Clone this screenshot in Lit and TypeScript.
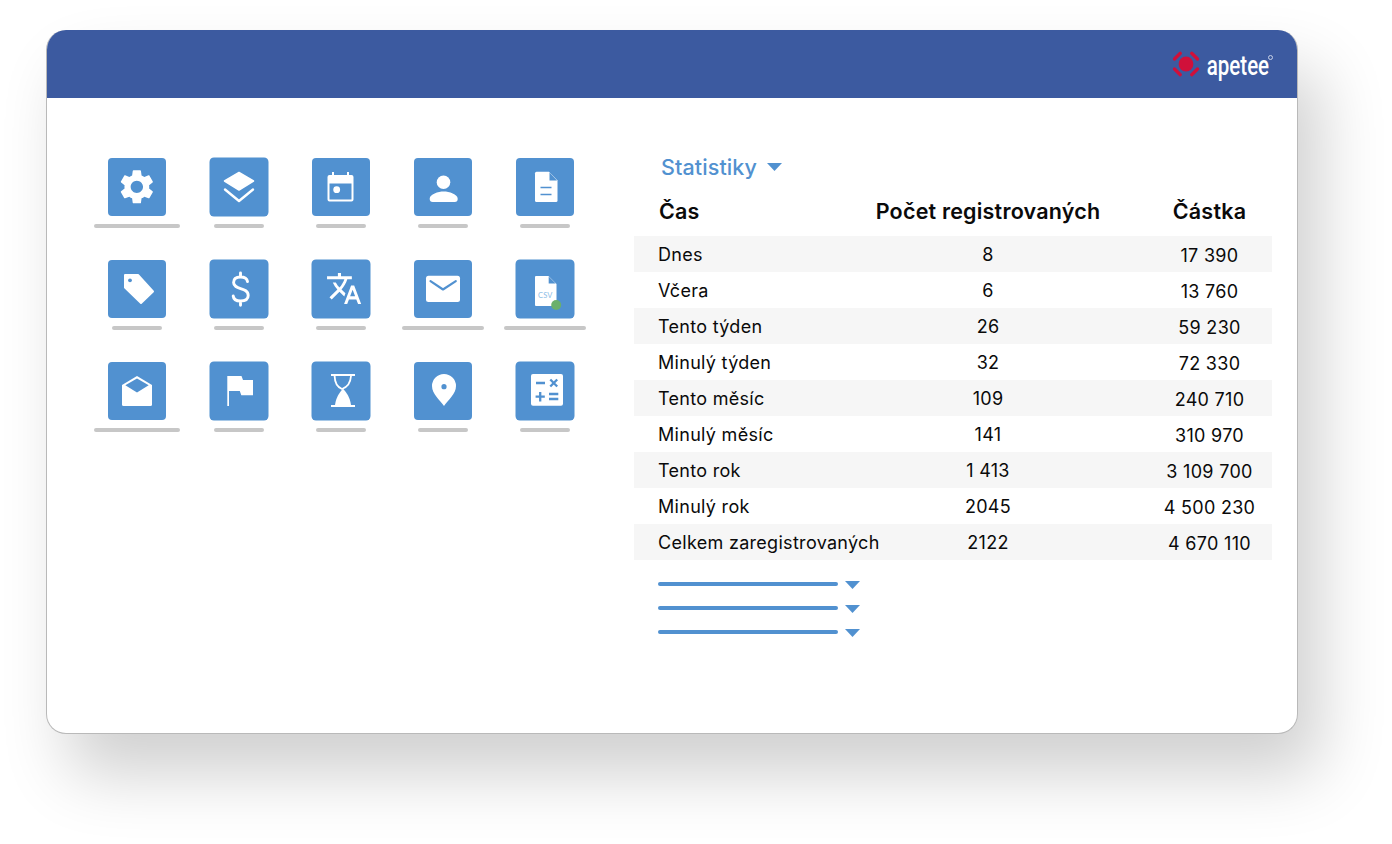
import { LitElement, html, css, svg, unsafeCSS } from "lit";
import { customElement } from "lit/decorators.js";

const B = "#5191d0";
const BC = unsafeCSS(B);

const tiles = [
  { bar: 86, lg: false, g: svg`<g transform="translate(8.2,8.200) scale(1.72)"><path fill="#fff" d="M19.14 12.94c.04-.3.06-.61.06-.94 0-.32-.02-.64-.07-.94l2.03-1.58c.18-.14.23-.41.12-.61l-1.92-3.32c-.12-.22-.37-.29-.59-.22l-2.39.96c-.5-.38-1.03-.7-1.62-.94l-.36-2.54c-.04-.24-.24-.41-.48-.41h-3.84c-.24 0-.43.17-.47.41l-.36 2.54c-.59.24-1.13.57-1.62.94l-2.39-.96c-.22-.08-.47 0-.59.22L2.74 8.87c-.12.21-.08.47.12.61l2.03 1.58c-.05.3-.09.63-.09.94s.02.64.07.94l-2.03 1.58c-.18.14-.23.41-.12.61l1.92 3.32c.12.22.37.29.59.22l2.39-.96c.5.38 1.03.7 1.62.94l.36 2.54c.05.24.24.41.48.41h3.84c.24 0 .44-.17.47-.41l.36-2.54c.59-.24 1.13-.56 1.62-.94l2.39.96c.22.08.47 0 .59-.22l1.92-3.32c.12-.22.07-.47-.12-.61l-2.01-1.58zM12 15.6c-1.98 0-3.6-1.62-3.6-3.6s1.62-3.6 3.6-3.6 3.6 1.62 3.6 3.6-1.62 3.6-3.6 3.6z"/></g>` },
  { bar: 50, lg: true, g: svg`<path fill="#fff" stroke="#fff" stroke-width="1.5" stroke-linejoin="round" d="M29 14.5 43.5 23 29 32 14.5 23z"/><path fill="none" stroke="#fff" stroke-width="2.400" stroke-linecap="round" stroke-linejoin="round" d="M15 31.500 29 43 43 31.500"/>` },
  { bar: 50, lg: false, g: svg`<path fill="#fff" fill-rule="evenodd" d="M17.5 17H20v-3h2v3h13v-3h2v3h2.500a2 2 0 0 1 2 2v22.600a2 2 0 0 1-2 2h-22a2 2 0 0 1-2-2V19a2 2 0 0 1 2-2zM17.5 25.500v16h22v-16z"/><circle cx="24.700" cy="31.700" r="3.400" fill="#fff"/>` },
  { bar: 50, lg: false, g: svg`<circle cx="29.500" cy="24.300" r="6.800" fill="#fff"/><path fill="#fff" d="M15.700 40.800c0-4.600 8.600-7.200 14-7.200s14 2.600 14 7.200V41a3 3 0 0 1-3 3h-22a3 3 0 0 1-3-3z"/>` },
  { bar: 50, lg: false, g: svg`<path fill="#fff" d="M20.500 13.800H33L41.500 22.500V42.500a1.500 1.500 0 0 1-1.500 1.500H20.500a1.500 1.500 0 0 1-1.500-1.500V15.300a1.500 1.500 0 0 1 1.500-1.500z"/><path fill="${B}" d="M33.500 14.500v8h7.500z"/><path fill="${B}" d="M24.500 28.700H35.500v1.600H24.500zM24.500 35.700H35.500v1.600H24.500z"/>` },

  { bar: 50, lg: false, g: svg`<path fill="#fff" stroke="#fff" stroke-width="2" stroke-linejoin="round" d="M17 15H30L45 31.500 33 43 17 27.500z"/><circle cx="22" cy="20.300" r="1.900" fill="${B}"/>` },
  { bar: 50, lg: true, g: svg`<path fill="none" stroke="#fff" stroke-width="2.900" stroke-linecap="round" d="M37.500 21.500C37 18.500 34.500 17 30.500 17 26.300 17 23.600 19 23.600 22.500 23.600 30.500 38.200 26.500 38.200 35.600 38.200 39.300 35.200 41 30.500 41 26.300 41 23.500 39 23.200 36M30.500 13V17M30.500 41V45.200"/>` },
  { bar: 50, lg: true, g: svg`<g transform="translate(13.5,10) scale(1.55)"><path fill="#fff" d="M12.87 15.07l-2.54-2.51.03-.03c1.74-1.94 2.98-4.17 3.71-6.53H17V4h-7V2H8v2H1v1.99h11.17C11.5 7.92 10.44 9.75 9 11.35 8.07 10.32 7.3 9.19 6.69 8h-2c.73 1.63 1.73 3.17 2.98 4.56l-5.09 5.02L4 19l5-5 3.11 3.11.76-2.04zM18.5 10h-2L12 22h2l1.12-3h4.75L21 22h2l-4.5-12zm-2.62 7l1.62-4.33L19.12 17h-3.24z"/></g>` },
  { bar: 82, lg: false, g: svg`<rect x="12" y="15.700" width="34" height="26.300" rx="2.500" fill="#fff"/><path fill="none" stroke="${B}" stroke-width="2.200" stroke-linecap="round" stroke-linejoin="round" d="M16.500 21.200 29 29.500 41.800 21.200"/>` },
  { bar: 82, lg: true, g: svg`<path fill="#fff" d="M20 16H32.500L40.500 24V46H20a1 1 0 0 1-1-1V17a1 1 0 0 1 1-1z"/><path fill="${B}" d="M32.700 16.500v7h7z"/><text class="csv" x="29.300" y="37.600" text-anchor="middle">CSV</text><circle cx="40.200" cy="45" r="5" fill="#6bb06c"/>` },

  { bar: 86, lg: false, g: svg`<path fill="#fff" d="M14 23 29 14 44 23V42.500a1.500 1.500 0 0 1-1.500 1.500h-27a1.500 1.500 0 0 1-1.500-1.500z"/><path fill="${B}" d="M17.300 23.300 29 16.400 40.700 23.300 29 30.400z"/>` },
  { bar: 50, lg: true, g: svg`<path fill="#fff" d="M17.300 14H31.500L33 18H43V33.300H31.300L29.800 29H19V44H17.300z"/>` },
  { bar: 50, lg: true, g: svg`<path fill="#fff" d="M19 12h24v2H19zM19 43h24v2H19z"/><path fill="none" stroke="#fff" stroke-width="1.800" d="M22.600 14C22.800 21 25 25 30 27 35.800 25 38.500 21 39 14"/><path fill="#fff" d="M31 26.500C28 30 24 35 23 43H39C38 35 34 30 31 26.500z"/>` },
  { bar: 50, lg: false, g: svg`<path fill="#fff" d="M30 12a12 12 0 0 1 12 12c0 8-8 14-12 20-4-6-12-12-12-20a12 12 0 0 1 12-12z"/><circle cx="30" cy="24.700" r="2.600" fill="${B}"/>` },
  { bar: 50, lg: true, g: svg`<rect x="15" y="12" width="32" height="31.700" rx="2" fill="#fff"/><path fill="none" stroke="${B}" stroke-width="2.300" d="M20 21H29M34.300 17.500 41.200 24.500M41.200 17.500 34.300 24.500M24.200 30V39.400M19.600 34.700H28.800M33 32H42.300M33 37H42.300"/>` },
];

const rows = [
  ["Dnes", "8", "17 390"],
  ["Včera", "6", "13 760"],
  ["Tento týden", "26", "59 230"],
  ["Minulý týden", "32", "72 330"],
  ["Tento měsíc", "109", "240 710"],
  ["Minulý měsíc", "141", "310 970"],
  ["Tento rok", "1 413", "3 109 700"],
  ["Minulý rok", "2045", "4 500 230"],
  ["Celkem zaregistrovaných", "2122", "4 670 110"],
];

@customElement("app-root")
export class AppRoot extends LitElement {
  static styles = css`
    :host {
      display: block;
      box-sizing: border-box;
      height: 844px;
      padding: 30px 94px 110px 46px;
      background: #fff;
      overflow: hidden;
      font-family: "Inter", "Liberation Sans", sans-serif;
      color: #0a0a0a;
    }
    .card {
      box-sizing: border-box;
      height: 704px;
      border: 1px solid #b9b9b9;
      border-top: 0;
      border-radius: 20px;
      background: #fff;
      box-shadow: 22px 40px 66px rgba(0, 0, 0, 0.19);
      overflow: hidden;
    }
    .top {
      height: 68px;
      margin: 0 -1px;
      background: #3c5aa0;
      display: flex;
      align-items: center;
      justify-content: flex-end;
      padding-right: 27px;
    }
    .mark { display: block; margin-right: 3px; }
    .word {
      display: block;
      color: #fff;
      font-family: "Roboto", sans-serif;
      font-size: 27px;
      font-weight: 500;
      line-height: 30px;
      margin: 3px 0 0 -16.5px;
      transform: scaleX(0.76);
      transform-origin: 100% 50%;
    }
    .reg {
      width: 3px;
      height: 3px;
      border: 1px solid #c6d0e6;
      border-radius: 50%;
      margin: 0 -2px 14px -1px;
    }
    .body {
      display: flex;
      padding: 56px 0 0 39px;
      gap: 38px;
    }
    .grid {
      display: grid;
      grid-template-columns: repeat(5, 102px);
      grid-auto-rows: 70px;
      row-gap: 32px;
      margin-top: 4px;
      align-self: flex-start;
    }
    .cell {
      display: flex;
      flex-direction: column;
      align-items: center;
    }
    .tile {
      width: 58px;
      height: 58px;
      border-radius: 4px;
      background: ${BC};
      margin-bottom: 8px;
      flex: none;
    }
    .tile.lg { box-shadow: 0 0 0 0.5px ${BC}; }
    .tile svg { display: block; }
    .csv {
      font: 7.5px "Lato", sans-serif;
      fill: #8cbde6;
      letter-spacing: 0.2px;
    }
    .bar {
      height: 4px;
      border-radius: 2px;
      background: #c7c7c7;
    }
    .panel { width: 638px; }
    .title {
      display: flex;
      align-items: center;
      gap: 10px;
      padding-left: 27px;
      height: 26px;
      font-size: 21.5px;
      font-weight: 500;
      letter-spacing: 0.1px;
      color: ${BC};
    }
    table {
      width: 638px;
      table-layout: fixed;
      border-collapse: collapse;
    }
    col.a { width: 195px; }
    col.b { width: 318px; }
    col.c { width: 125px; }
    th {
      height: 56px;
      padding: 6px 0 0;
      font-size: 21.5px;
      font-weight: 600;
      letter-spacing: 0.2px;
      text-align: center;
      white-space: nowrap;
      box-sizing: border-box;
    }
    th:first-child { text-align: left; padding-left: 25px; }
    td {
      height: 36px;
      padding: 0;
      font-size: 18px;
      letter-spacing: 0.3px;
      text-align: center;
      white-space: nowrap;
      box-sizing: border-box;
    }
    td:first-child { text-align: left; padding-left: 24px; }
    td:last-child { padding-top: 2px; }
    tbody tr:nth-child(odd) { background: #f6f6f6; }
    .lines { margin: 12px 0 0 24px; }
    .line {
      display: flex;
      align-items: center;
      gap: 7px;
      height: 24px;
    }
    .rule {
      width: 180px;
      height: 4px;
      border-radius: 2px;
      background: ${BC};
    }
    .tri { display: block; }
    .line .tri { margin-top: 1px; }
  `;

  private arrow() {
    return html`<svg class="tri" width="15" height="8" viewBox="0 0 15 8"><path fill=${B} d="M0 0H15L7.500 8z"/></svg>`;
  }

  render() {
    return html`
      <div class="card">
        <div class="top">
          <svg class="mark" width="28" height="28" viewBox="-14 -14 28 28">
            <circle r="7.400" fill="#d0103a"/>
            <path fill="none" stroke="#d0103a" stroke-width="3.300" stroke-linecap="round"
              d="M-11.500-5-5.700-10.700M11.500-5 5.700-10.700M-11.500 5-5.700 10.700M11.500 5 5.700 10.700"/>
          </svg>
          <span class="word">apetee</span><span class="reg"></span>
        </div>
        <div class="body">
          <div class="grid">
            ${tiles.map(
              (t) => html`<div class="cell">
                <div class="tile ${t.lg ? "lg" : ""}">
                  <svg width="58" height="58" viewBox="0 0 58 58">${t.g}</svg>
                </div>
                <div class="bar" style="width:${t.bar}px"></div>
              </div>`
            )}
          </div>
          <div class="panel">
            <div class="title"><span>Statistiky</span>${this.arrow()}</div>
            <table>
              <colgroup><col class="a"/><col class="b"/><col class="c"/></colgroup>
              <thead><tr><th>Čas</th><th>Počet registrovaných</th><th>Částka</th></tr></thead>
              <tbody>
                ${rows.map((r) => html`<tr><td>${r[0]}</td><td>${r[1]}</td><td>${r[2]}</td></tr>`)}
              </tbody>
            </table>
            <div class="lines">
              ${[0, 1, 2].map(() => html`<div class="line"><div class="rule"></div>${this.arrow()}</div>`)}
            </div>
          </div>
        </div>
      </div>
    `;
  }
}
